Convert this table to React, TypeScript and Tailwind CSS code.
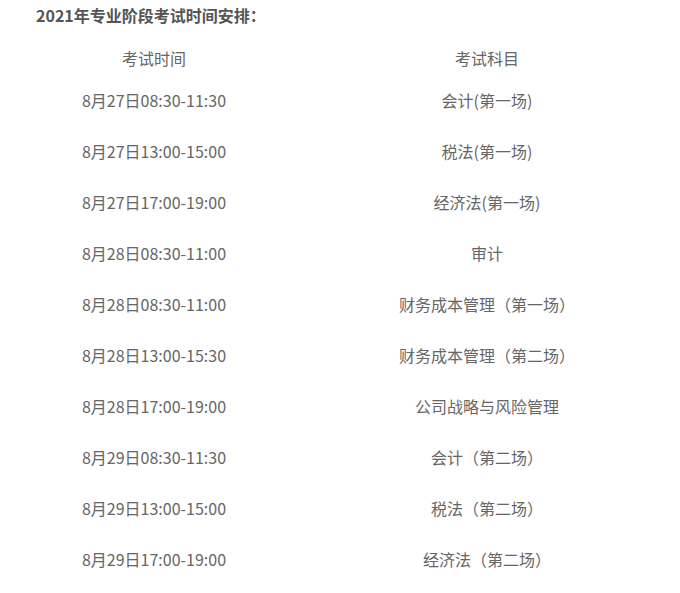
const rows: [string, string][] = [
  ['8月27日08:30-11:30', '会计(第一场)'],
  ['8月27日13:00-15:00', '税法(第一场)'],
  ['8月27日17:00-19:00', '经济法(第一场)'],
  ['8月28日08:30-11:00', '审计'],
  ['8月28日08:30-11:00', '财务成本管理（第一场）'],
  ['8月28日13:00-15:30', '财务成本管理（第二场）'],
  ['8月28日17:00-19:00', '公司战略与风险管理'],
  ['8月29日08:30-11:30', '会计（第二场）'],
  ['8月29日13:00-15:00', '税法（第二场）'],
  ['8月29日17:00-19:00', '经济法（第二场）'],
];

export default function App() {
  return (
    <div className="w-[680px] h-[593px] overflow-hidden bg-white font-['Noto_Sans_CJK_SC',sans-serif] text-[16px] text-[#666]">
      <div className="pl-[36px] h-[31px] leading-[31px] font-bold text-[#555]">
        2021年专业阶段考试时间安排：
      </div>
      <div className="mt-[10px] grid grid-cols-[308px_358px]">
        <div className="h-[33px] flex items-center justify-center">考试时间</div>
        <div className="h-[33px] flex items-center justify-center">考试科目</div>
        {rows.map(([time, subject], idx) => (
          <div key={idx} className="contents">
            <div className="h-[51px] flex items-center justify-center">{time}</div>
            <div className="h-[51px] flex items-center justify-center">{subject}</div>
          </div>
        ))}
      </div>
    </div>
  );
}
